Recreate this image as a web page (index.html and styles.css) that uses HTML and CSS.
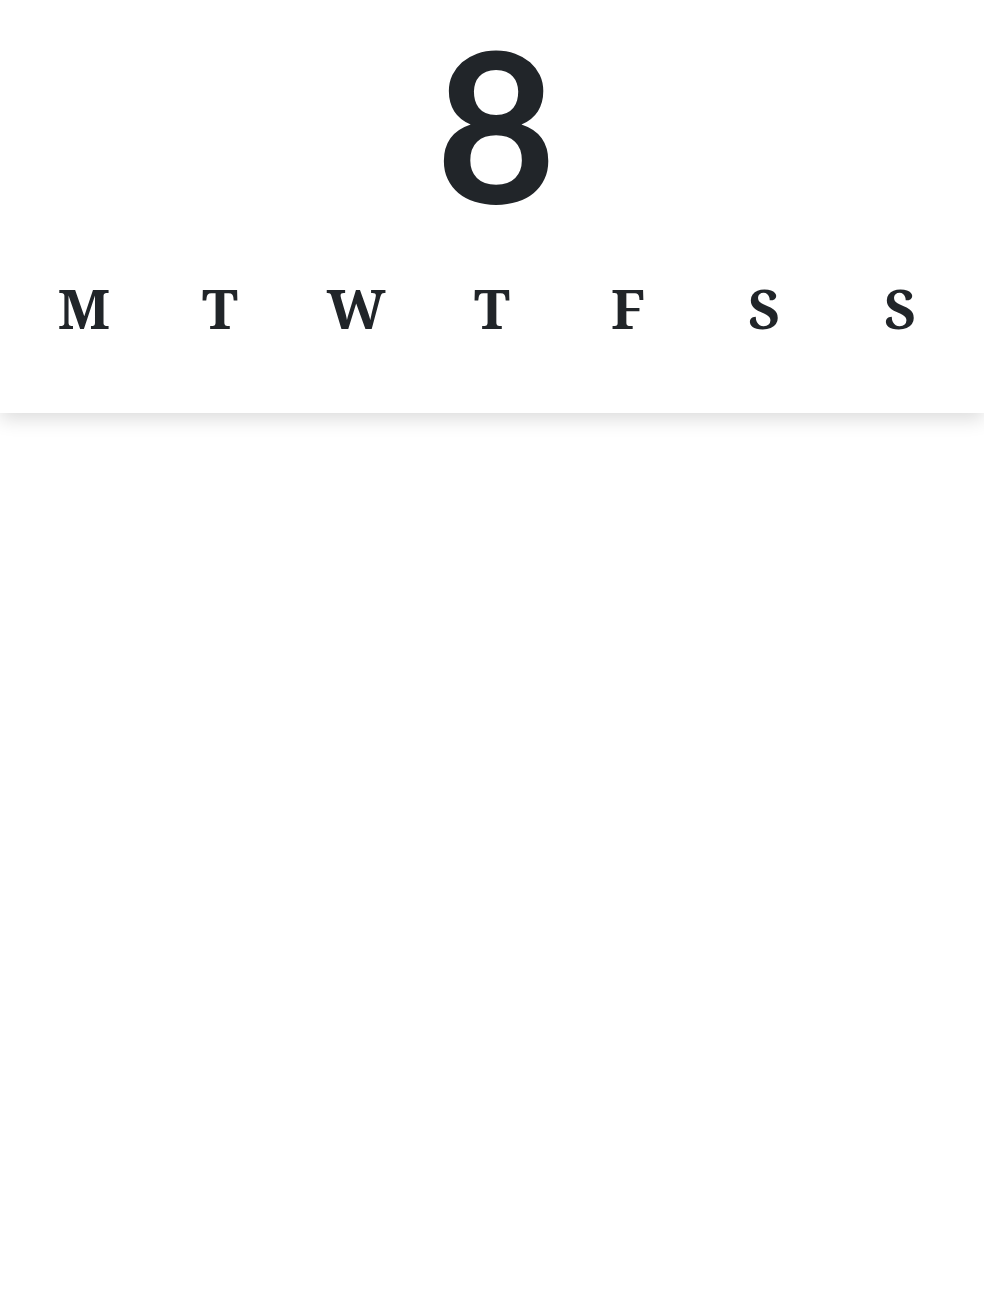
FILE: index.html
```html
<!DOCTYPE html>
<html lang="en">
<head>
<meta charset="utf-8">
<title>Calendar</title>
<link rel="stylesheet" href="styles.css">
</head>
<body>
<header class="header">
  <div class="date">8</div>
  <div class="weekdays">
    <span class="day">M</span>
    <span class="day">T</span>
    <span class="day">W</span>
    <span class="day">T</span>
    <span class="day">F</span>
    <span class="day">S</span>
    <span class="day">S</span>
  </div>
</header>
</body>
</html>
```
FILE: styles.css
```css
html, body {
  margin: 0;
  padding: 0;
  background: #ffffff;
}
body {
  width: 984px;
  height: 1304px;
  overflow: hidden;
  color: #212529;
}
.header {
  background: #ffffff;
  height: 413px;
  box-sizing: border-box;
  box-shadow: 0 6px 18px rgba(0, 0, 0, 0.14);
  position: relative;
  z-index: 1;
}
.date {
  font-family: "Lato", sans-serif;
  font-weight: 700;
  font-size: 208px;
  line-height: 246px;
  text-align: center;
  padding-left: 8px;
}
.weekdays {
  display: grid;
  grid-template-columns: repeat(7, 1fr);
  padding: 32px 16px 0;
}
.day {
  font-family: "Noto Serif", "DejaVu Serif", serif;
  font-weight: 700;
  font-size: 55px;
  line-height: 60px;
  text-align: center;
}
```
